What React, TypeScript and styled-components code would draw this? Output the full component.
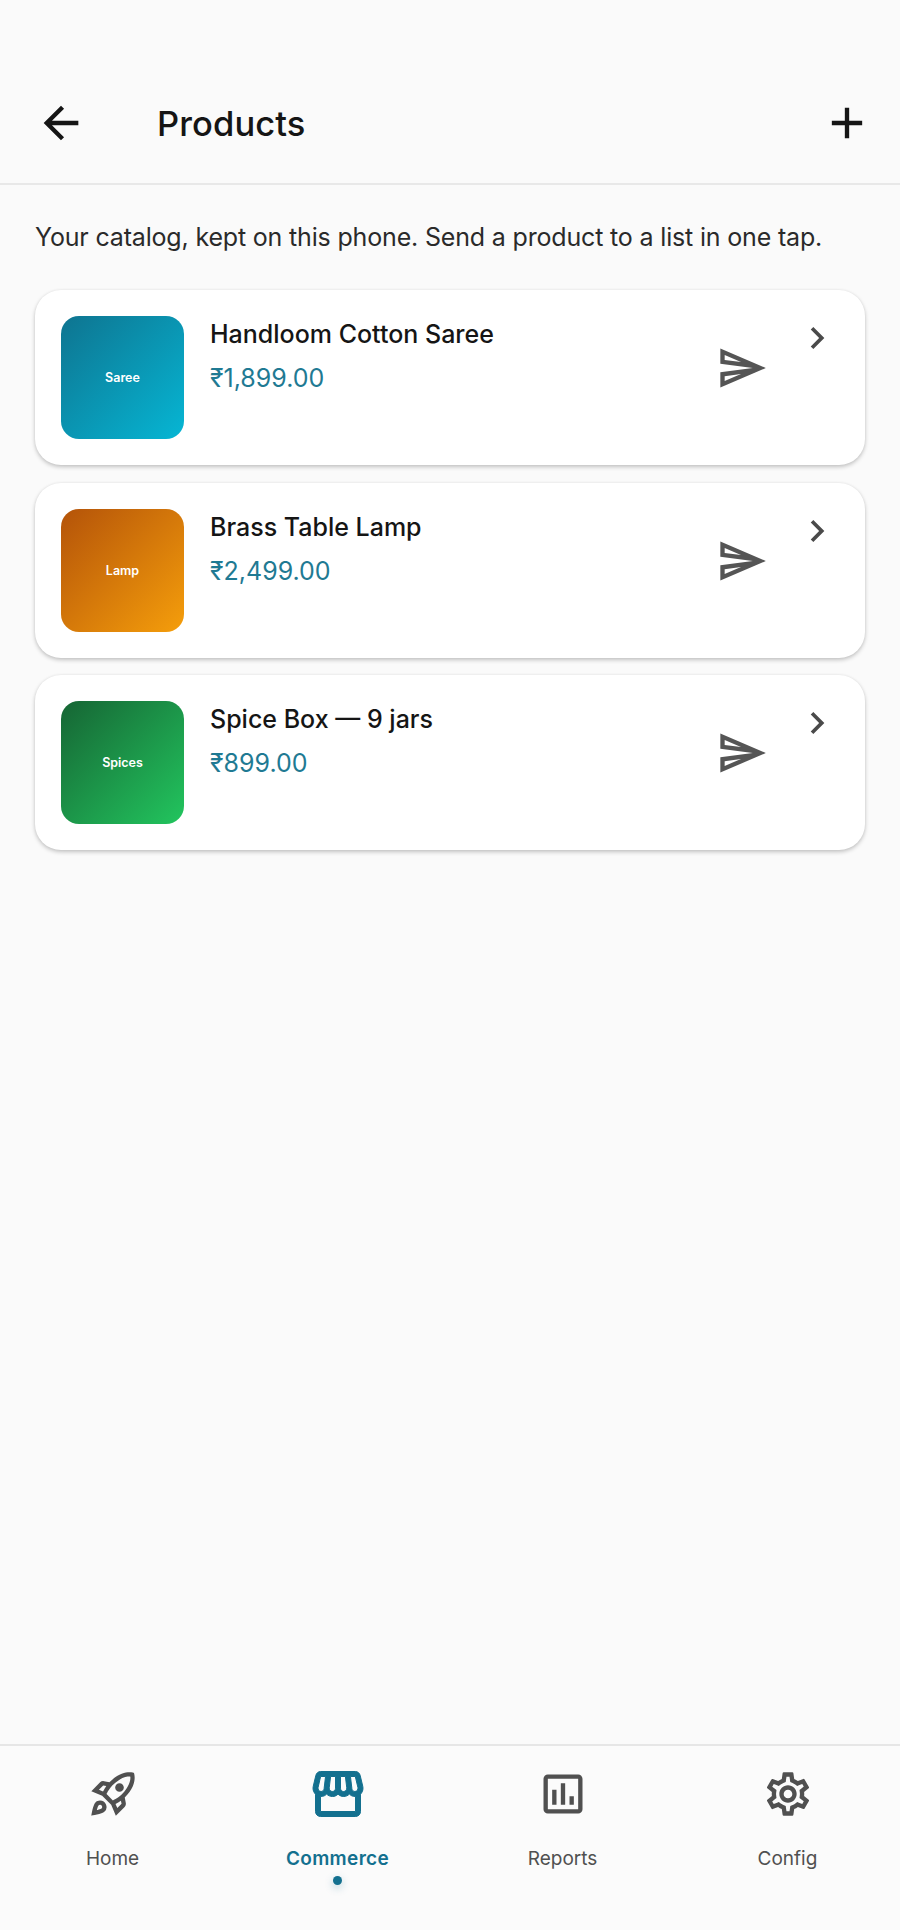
import React from "react";
import styled, { createGlobalStyle } from "styled-components";
import {
  MdAdd,
  MdArrowBack,
  MdChevronRight,
  MdOutlineAssessment,
  MdOutlineRocketLaunch,
  MdOutlineSend,
  MdOutlineSettings,
  MdOutlineStorefront,
} from "react-icons/md";

const Global = createGlobalStyle`
  html, body { margin: 0; padding: 0; background: #fafafa; }
  * { box-sizing: border-box; }
  body { font-family: Inter, "Noto Sans", sans-serif; }
`;

const Page = styled.div`
  width: 900px;
  height: 1930px;
  display: flex;
  flex-direction: column;
  background: #fafafa;
  color: #151515;
`;

const Header = styled.header`
  height: 185px;
  flex: none;
  padding: 63px 27px 0 35px;
  display: flex;
  align-items: center;
  border-bottom: 2px solid #e8e8e8;
`;

const HeaderIcon = styled.span`
  display: flex;
  flex: none;
  color: #151515;
`;

const Title = styled.h1`
  flex: 1;
  margin: 0 0 0 70px;
  font-size: 34.5px;
  font-weight: 500;
  letter-spacing: 0.1px;
`;

const Main = styled.main`
  flex: 1;
  padding: 35px 35px 0;
`;

const Intro = styled.p`
  margin: 0 0 36px;
  font-size: 25px;
  line-height: 34px;
  font-weight: 400;
  letter-spacing: -0.17px;
  color: #2a2a2a;
`;

const List = styled.div`
  display: flex;
  flex-direction: column;
  gap: 17.5px;
`;

const Card = styled.article`
  height: 175px;
  padding: 26px;
  display: flex;
  align-items: flex-start;
  background: #fff;
  border-radius: 26px;
  box-shadow: 0 2px 4px rgba(0, 0, 0, 0.22), 0 0 3px rgba(0, 0, 0, 0.05);
`;

const Thumb = styled.div<{ $from: string; $to: string }>`
  width: 123px;
  height: 123px;
  flex: none;
  display: flex;
  align-items: center;
  justify-content: center;
  border-radius: 18px;
  background: linear-gradient(135deg, ${(p) => p.$from}, ${(p) => p.$to});
  color: #fff;
  font-size: 12.5px;
  font-weight: 600;
`;

const Info = styled.div`
  flex: 1;
  margin-left: 26px;
  padding-top: 1px;
  display: flex;
  flex-direction: column;
`;

const Name = styled.div`
  font-size: 25px;
  line-height: 34px;
  font-weight: 500;
  color: #151515;
`;

const Price = styled.div`
  margin-top: 10px;
  font-size: 25px;
  line-height: 34px;
  font-weight: 400;
  color: #1f7a93;
`;

const SendIcon = styled.span`
  display: flex;
  flex: none;
  margin: 26px 27.5px 0 0;
  color: #555;
`;

const ChevronIcon = styled.span`
  display: flex;
  flex: none;
  color: #4a4a4a;
`;

const Nav = styled.nav`
  height: 186px;
  flex: none;
  display: grid;
  grid-template-columns: repeat(4, 1fr);
  background: #fbfbfb;
  border-top: 2px solid #e6e6e6;
`;

const NavItem = styled.div<{ $active?: boolean }>`
  position: relative;
  display: flex;
  flex-direction: column;
  align-items: center;
  padding-top: 21.5px;
  color: ${(p) => (p.$active ? "#13708f" : "#505050")};
`;

const NavGlyph = styled.span<{ $active?: boolean }>`
  height: 52px;
  display: flex;
  align-items: center;
  justify-content: center;

  svg path {
    stroke: ${(p) => (p.$active ? "currentColor" : "none")};
    stroke-width: 0.4;
  }
  svg path:first-child {
    stroke: none;
  }
`;

const NavLabel = styled.span<{ $active?: boolean }>`
  margin-top: 26px;
  font-size: 19px;
  line-height: 26px;
  font-weight: ${(p) => (p.$active ? 600 : 400)};
  letter-spacing: ${(p) => (p.$active ? "0.35px" : "0")};
`;

const Dot = styled.span`
  position: absolute;
  top: 130px;
  left: 50%;
  width: 9px;
  height: 9px;
  margin-left: -4.5px;
  border-radius: 50%;
  background: #13708f;
  box-shadow: 0 3px 8px rgba(19, 112, 143, 0.3);
`;

const products = [
  { thumb: "Saree", name: "Handloom Cotton Saree", price: "₹1,899.00", from: "#0e7490", to: "#06b6d4" },
  { thumb: "Lamp", name: "Brass Table Lamp", price: "₹2,499.00", from: "#b45309", to: "#f59e0b" },
  { thumb: "Spices", name: "Spice Box — 9 jars", price: "₹899.00", from: "#166534", to: "#22c55e" },
];

const tabs = [
  { label: "Home", Icon: MdOutlineRocketLaunch, size: 52 },
  { label: "Commerce", Icon: MdOutlineStorefront, size: 60, active: true },
  { label: "Reports", Icon: MdOutlineAssessment, size: 52 },
  { label: "Config", Icon: MdOutlineSettings, size: 52 },
];

export default function App() {
  return (
    <Page>
      <Global />
      <Header>
        <HeaderIcon><MdArrowBack size={52} /></HeaderIcon>
        <Title>Products</Title>
        <HeaderIcon><MdAdd size={52} /></HeaderIcon>
      </Header>
      <Main>
        <Intro>Your catalog, kept on this phone. Send a product to a list in one tap.</Intro>
        <List>
          {products.map((p) => (
            <Card key={p.name}>
              <Thumb $from={p.from} $to={p.to}>{p.thumb}</Thumb>
              <Info>
                <Name>{p.name}</Name>
                <Price>{p.price}</Price>
              </Info>
              <SendIcon><MdOutlineSend size={52} /></SendIcon>
              <ChevronIcon><MdChevronRight size={44} /></ChevronIcon>
            </Card>
          ))}
        </List>
      </Main>
      <Nav>
        {tabs.map(({ label, Icon, size, active }) => (
          <NavItem key={label} $active={active}>
            <NavGlyph $active={active}><Icon size={size} /></NavGlyph>
            <NavLabel $active={active}>{label}</NavLabel>
            {active && <Dot />}
          </NavItem>
        ))}
      </Nav>
    </Page>
  );
}
